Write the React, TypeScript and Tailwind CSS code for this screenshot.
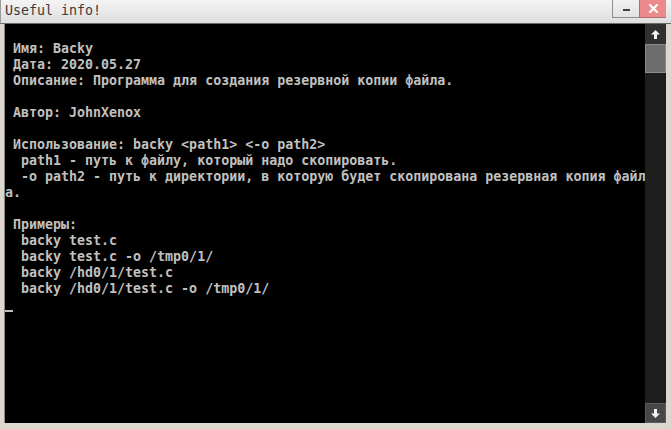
const LINES = [
  '',
  ' Имя: Backy',
  ' Дата: 2020.05.27',
  ' Описание: Программа для создания резервной копии файла.',
  '',
  ' Автор: JohnXenox',
  '',
  ' Использование: backy <path1> <-o path2>',
  '  path1 - путь к файлу, который надо скопировать.',
  '  -o path2 - путь к директории, в которую будет скопирована резервная копия файл',
  'а.',
  '',
  ' Примеры:',
  '  backy test.c',
  '  backy test.c -o /tmp0/1/',
  '  backy /hd0/1/test.c',
  '  backy /hd0/1/test.c -o /tmp0/1/',
]

const mono = { fontFamily: '"DejaVu Sans Mono", "Liberation Mono", monospace' }

function TitleBar() {
  return (
    <div className="h-[24px] flex border-b border-[#6a6a6a] bg-gradient-to-b from-[#f4f4f4] to-[#dedede] border-l border-l-[#9a9a9a]">
      <div className="flex-1 pl-[4px] pt-[3px] text-[13.3px] leading-[16px] text-[#3a3a3a]" style={mono}>
        Useful info!
      </div>
      <div className="w-[27px] h-[18px] flex items-center justify-center border-l border-b border-[#8e8e8e] bg-gradient-to-b from-[#f2f2f2] to-[#e2e2e2]">
        <div className="w-[7px] h-[2px] bg-[#404040] mt-[3px]" />
      </div>
      <div className="w-[27px] h-[18px] flex items-center justify-center border-l border-b border-[#b06a6c] bg-[#eb8a8d]">
        <svg width="9" height="9" viewBox="0 0 9 9">
          <path d="M1 1 L8 8 M8 1 L1 8" stroke="#fff" strokeWidth="2.2" strokeLinecap="square" />
        </svg>
      </div>
      <div className="w-[5px]" />
    </div>
  )
}

function Arrow({ up }: { up?: boolean }) {
  return (
    <svg width="9" height="9" viewBox="0 0 9 9" className={up ? '' : 'rotate-180'}>
      <path d="M4.5 0 L9 4.5 L6 4.5 L6 9 L3 9 L3 4.5 L0 4.5 Z" fill="#f4f4f4" />
    </svg>
  )
}

function ScrollBar() {
  return (
    <div className="w-[21px] flex flex-col bg-[#1e1e1e]">
      <div className="h-[20px] flex items-center justify-center bg-[#303030]">
        <Arrow up />
      </div>
      <div className="h-[29px] bg-[#6c6c6c] border border-[#8a8a8a]" />
      <div className="flex-1" />
      <div className="h-[20px] flex items-center justify-center bg-[#474747] border border-[#5c5c5c]">
        <Arrow />
      </div>
    </div>
  )
}

export default function App() {
  return (
    <div className="w-[671px] h-[429px] flex flex-col bg-[#dcd8d0] overflow-hidden">
      <TitleBar />
      <div className="flex-1 flex pl-[4px] pr-[5px] min-h-0">
        <div className="flex-1 bg-black border-l border-[#8f8b84] overflow-hidden">
          <div className="text-[13.3px] leading-[16px] font-bold text-[#c0c0c0] whitespace-pre pt-[1px]" style={mono}>
            {LINES.map((l, i) => (
              <div key={i} className="h-[16px]">{l}</div>
            ))}
            <div className="h-[16px] relative">
              <div className="absolute left-0 top-[13px] w-[8px] h-[2px] bg-[#c0c0c0]" />
            </div>
          </div>
        </div>
        <ScrollBar />
      </div>
      <div className="h-[6px]" />
    </div>
  )
}
